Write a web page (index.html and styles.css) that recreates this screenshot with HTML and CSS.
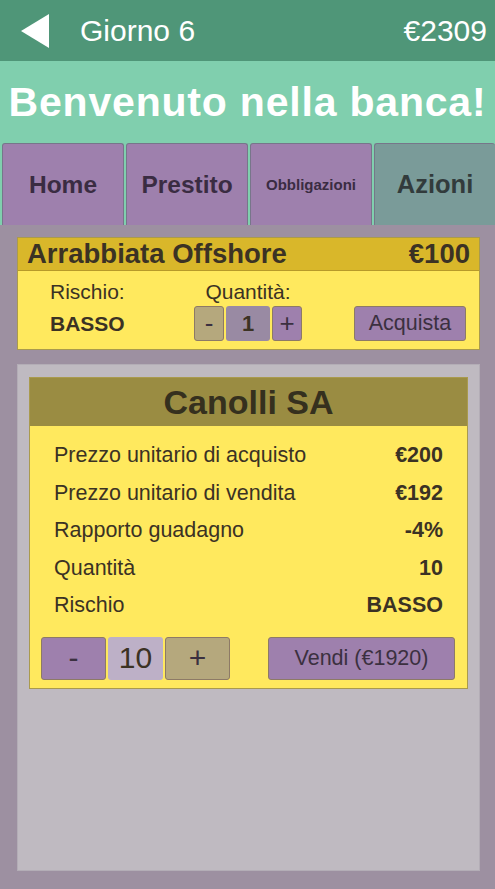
FILE: index.html
```html
<!DOCTYPE html>
<html lang="it">
<head>
    <meta charset="UTF-8">
    <meta name="viewport" content="width=device-width, initial-scale=1.0">
    <title>Banca</title>
    <link rel="stylesheet" href="styles.css">
</head>
<body>
    <header class="topbar">
        <svg class="back" width="28" height="34" viewBox="0 0 28 34">
            <polygon points="0,17 28,0 28,34" fill="#ffffff"/>
        </svg>
        <span class="day">Giorno 6</span>
        <span class="money">€2309</span>
    </header>

    <div class="banner">
        <h1>Benvenuto nella banca!</h1>
    </div>

    <nav class="tabs">
        <a class="tab">Home</a>
        <a class="tab">Prestito</a>
        <a class="tab tab-small">Obbligazioni</a>
        <a class="tab active">Azioni</a>
    </nav>

    <main class="content">
        <section class="offer">
            <div class="offer-head">
                <span>Arrabbiata Offshore</span>
                <span>€100</span>
            </div>
            <div class="offer-body">
                <div class="col risk">
                    <span class="label">Rischio:</span>
                    <span class="value">BASSO</span>
                </div>
                <div class="col qty">
                    <span class="label">Quantità:</span>
                    <div class="stepper small">
                        <button class="btn tan">-</button>
                        <span class="count grey">1</span>
                        <button class="btn purple">+</button>
                    </div>
                </div>
                <button class="btn purple buy">Acquista</button>
            </div>
        </section>

        <section class="portfolio">
            <div class="stock">
                <h2 class="stock-head">Canolli SA</h2>
                <div class="stock-rows">
                    <span>Prezzo unitario di acquisto</span><b>€200</b>
                    <span>Prezzo unitario di vendita</span><b>€192</b>
                    <span>Rapporto guadagno</span><b>-4%</b>
                    <span>Quantità</span><b>10</b>
                    <span>Rischio</span><b>BASSO</b>
                </div>
                <div class="stock-actions">
                    <div class="stepper big">
                        <button class="btn purple">-</button>
                        <span class="count light">10</span>
                        <button class="btn tan">+</button>
                    </div>
                    <button class="btn purple sell">Vendi (€1920)</button>
                </div>
            </div>
        </section>
    </main>
</body>
</html>
```

FILE: styles.css
```css
body {
    font-family: "Liberation Sans", Arial, sans-serif;
    margin: 0;
    padding: 0;
    display: flex;
    flex-direction: column;
    min-height: 100vh;
    background-color: #9d90a1;
    color: #3b3224;
}
.topbar {
    background-color: #4f9678;
    height: 61px;
    display: flex;
    align-items: center;
    padding: 0 8px 0 21px;
    color: white;
    font-size: 30px;
}
.back {
    display: block;
    margin-right: 31px;
}
.money {
    margin-left: auto;
}
.banner {
    background-color: #80cfae;
    height: 82px;
    display: flex;
    align-items: center;
    justify-content: center;
}
h1 {
    margin: 0;
    color: white;
    font-size: 41px;
    letter-spacing: 0.8px;
    white-space: nowrap;
}
.tabs {
    background-color: #80cfae;
    display: flex;
    gap: 2px;
    padding-left: 2px;
    height: 82px;
}
.tab {
    flex: 1;
    display: flex;
    align-items: center;
    justify-content: center;
    background-color: #9e80ad;
    border: 1px solid #77768a;
    border-bottom: none;
    border-radius: 3px 3px 0 0;
    font-weight: bold;
    font-size: 24.5px;
    color: #3a2c42;
}
.tab-small {
    font-size: 15px;
}
.tab.active {
    background-color: #7a9b99;
    border-right: none;
    color: #323b3c;
    font-size: 25.5px;
}
.content {
    flex: 1;
    display: flex;
    flex-direction: column;
    padding: 12px 15px 18px 17px;
}
.offer {
    background-color: #ffe95e;
    border: 1px solid #a99a4e;
    margin-bottom: 14px;
}
.offer-head {
    background-color: #d9b72a;
    height: 32px;
    display: flex;
    align-items: center;
    justify-content: space-between;
    padding: 0 9px 0 9px;
    font-weight: bold;
    font-size: 27.5px;
    border-bottom: 1px solid #b79a2a;
}
.offer-body {
    display: flex;
    align-items: flex-end;
    padding: 10px 13px 8px 32px;
}
.col {
    display: flex;
    flex-direction: column;
}
.label {
    font-size: 21px;
    line-height: 22px;
    margin-bottom: 3px;
}
.risk {
    width: 144px;
}
.risk .value {
    font-weight: bold;
    font-size: 21px;
    line-height: 35px;
}
.qty {
    align-items: center;
}
.stepper {
    display: flex;
    gap: 2px;
}
.btn {
    font-family: inherit;
    color: #3b3040;
    border: 1px solid #8d7a66;
    border-radius: 3px;
    padding: 0;
    cursor: pointer;
}
.btn.purple {
    background-color: #9e80ad;
}
.btn.tan {
    background-color: #b5a87d;
}
.count {
    display: flex;
    align-items: center;
    justify-content: center;
    border-radius: 3px;
}
.count.grey {
    background-color: #998aa3;
}
.count.light {
    background-color: #bdb0c7;
}
.small .btn {
    width: 30px;
    height: 35px;
    font-size: 26px;
}
.small .count {
    width: 44px;
    height: 35px;
    font-size: 22px;
    font-weight: bold;
}
.buy {
    margin-left: auto;
    width: 112px;
    height: 35px;
    font-size: 21.5px;
}
.portfolio {
    flex: 1;
    background-color: #bfbac1;
    border: 1px solid #b3adb6;
    padding: 12px 11px;
}
.stock {
    background-color: #ffe95e;
    border: 1px solid #a99a4e;
}
.stock-head {
    margin: 0;
    background-color: #9a8c42;
    height: 48px;
    display: flex;
    align-items: center;
    justify-content: center;
    font-size: 34px;
    color: #35301e;
}
.stock-rows {
    display: grid;
    grid-template-columns: 1fr auto;
    grid-auto-rows: 37.5px;
    align-items: center;
    padding: 11px 24px 0 24px;
    font-size: 21.5px;
}
.stock-rows b {
    text-align: right;
}
.stock-actions {
    display: flex;
    align-items: center;
    padding: 12px 12px 8px 11px;
}
.big .btn {
    width: 65px;
    height: 43px;
    font-size: 30px;
}
.big .count {
    width: 55px;
    height: 43px;
    font-size: 30px;
}
.sell {
    margin-left: auto;
    width: 187px;
    height: 43px;
    font-size: 21.5px;
}
```
